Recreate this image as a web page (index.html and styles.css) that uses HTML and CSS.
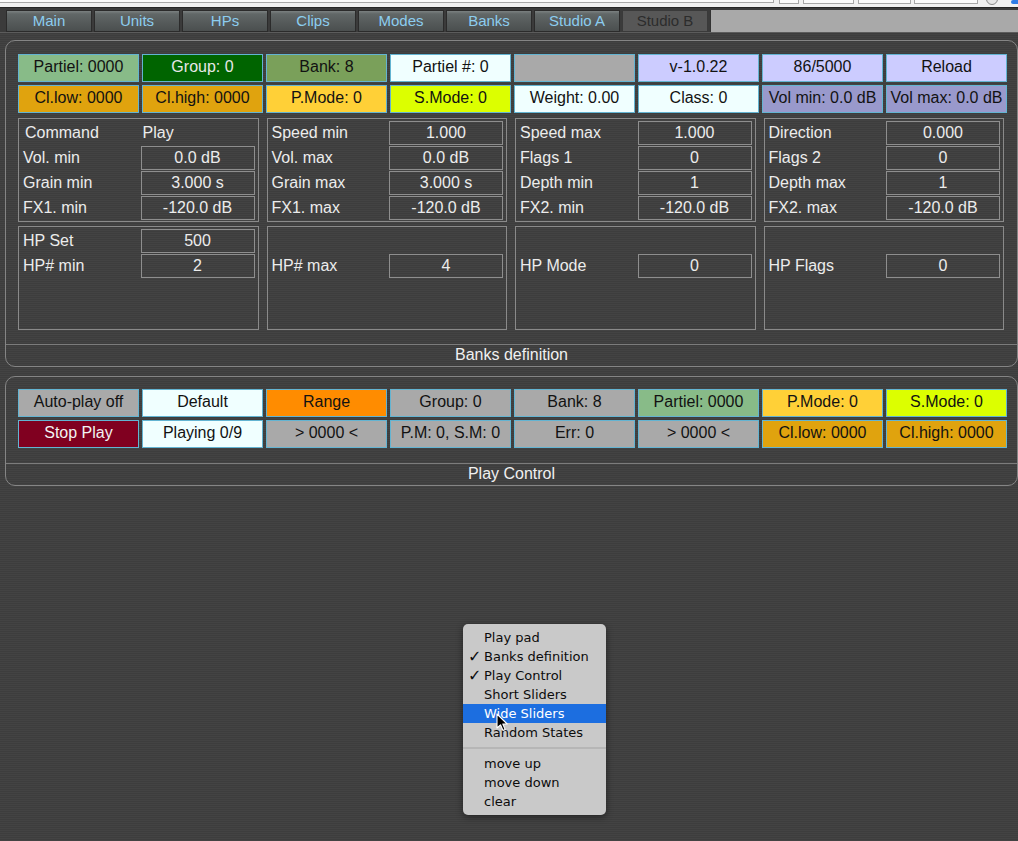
FILE: index.html
```html
<!DOCTYPE html>
<html>
<head>
<meta charset="utf-8">
<link rel="stylesheet" href="styles.css">
</head>
<body>
<div class="topstrip">
  <div class="tf tf1"></div>
  <div class="tf tf2"></div>
  <div class="tf tf3"></div>
  <div class="tf tf4"></div>
  <div class="tf tf5"></div>
  <div class="tcirc"></div>
  <div class="tblue"></div>
</div>
<div class="tabbar">
  <div class="tab">Main</div>
  <div class="tab">Units</div>
  <div class="tab">HPs</div>
  <div class="tab">Clips</div>
  <div class="tab">Modes</div>
  <div class="tab">Banks</div>
  <div class="tab">Studio A</div>
  <div class="tab sel">Studio B</div>
  <div class="tabfill"></div>
</div>

<div class="panel p1">
  <div class="pbody">
    <div class="btns">
      <div class="b c-green">Partiel: 0000</div>
      <div class="b c-dgreen">Group: 0</div>
      <div class="b c-olive">Bank: 8</div>
      <div class="b c-azure">Partiel #: 0</div>
      <div class="b c-gray"></div>
      <div class="b c-lav">v-1.0.22</div>
      <div class="b c-lav">86/5000</div>
      <div class="b c-lav">Reload</div>
      <div class="b c-gold">Cl.low: 0000</div>
      <div class="b c-gold">Cl.high: 0000</div>
      <div class="b c-yel">P.Mode: 0</div>
      <div class="b c-lime">S.Mode: 0</div>
      <div class="b c-azure">Weight: 0.00</div>
      <div class="b c-azure">Class: 0</div>
      <div class="b c-slate">Vol min: 0.0 dB</div>
      <div class="b c-slate">Vol max: 0.0 dB</div>
    </div>
    <div class="boxes">
      <div class="box">
        <div class="lbl hd">Command</div><div class="hv">Play</div>
        <div class="lbl">Vol. min</div><div class="val">0.0 dB</div>
        <div class="lbl">Grain min</div><div class="val">3.000 s</div>
        <div class="lbl">FX1. min</div><div class="val">-120.0 dB</div>
      </div>
      <div class="box">
        <div class="lbl">Speed min</div><div class="val">1.000</div>
        <div class="lbl">Vol. max</div><div class="val">0.0 dB</div>
        <div class="lbl">Grain max</div><div class="val">3.000 s</div>
        <div class="lbl">FX1. max</div><div class="val">-120.0 dB</div>
      </div>
      <div class="box">
        <div class="lbl">Speed max</div><div class="val">1.000</div>
        <div class="lbl">Flags 1</div><div class="val">0</div>
        <div class="lbl">Depth min</div><div class="val">1</div>
        <div class="lbl">FX2. min</div><div class="val">-120.0 dB</div>
      </div>
      <div class="box">
        <div class="lbl">Direction</div><div class="val">0.000</div>
        <div class="lbl">Flags 2</div><div class="val">0</div>
        <div class="lbl">Depth max</div><div class="val">1</div>
        <div class="lbl">FX2. max</div><div class="val">-120.0 dB</div>
      </div>
      <div class="box">
        <div class="lbl">HP Set</div><div class="val">500</div>
        <div class="lbl">HP# min</div><div class="val">2</div>
      </div>
      <div class="box">
        <div class="lbl"></div><div></div>
        <div class="lbl">HP# max</div><div class="val">4</div>
      </div>
      <div class="box">
        <div class="lbl"></div><div></div>
        <div class="lbl">HP Mode</div><div class="val">0</div>
      </div>
      <div class="box">
        <div class="lbl"></div><div></div>
        <div class="lbl">HP Flags</div><div class="val">0</div>
      </div>
    </div>
  </div>
  <div class="footer">Banks definition</div>
</div>

<div class="panel p2">
  <div class="pbody">
    <div class="btns">
      <div class="b c-gray">Auto-play off</div>
      <div class="b c-azure">Default</div>
      <div class="b c-orange">Range</div>
      <div class="b c-gray">Group: 0</div>
      <div class="b c-gray">Bank: 8</div>
      <div class="b c-green">Partiel: 0000</div>
      <div class="b c-yel">P.Mode: 0</div>
      <div class="b c-lime">S.Mode: 0</div>
      <div class="b c-red">Stop Play</div>
      <div class="b c-azure">Playing 0/9</div>
      <div class="b c-gray">&gt; 0000 &lt;</div>
      <div class="b c-gray">P.M: 0, S.M: 0</div>
      <div class="b c-gray">Err: 0</div>
      <div class="b c-gray">&gt; 0000 &lt;</div>
      <div class="b c-gold">Cl.low: 0000</div>
      <div class="b c-gold">Cl.high: 0000</div>
    </div>
  </div>
  <div class="footer">Play Control</div>
</div>

<div class="menu">
  <div class="mi">Play pad</div>
  <div class="mi"><span class="chk">✓</span>Banks definition</div>
  <div class="mi"><span class="chk">✓</span>Play Control</div>
  <div class="mi">Short Sliders</div>
  <div class="mi hi">Wide Sliders</div>
  <div class="mi">Random States</div>
  <div class="msep"></div>
  <div class="mi">move up</div>
  <div class="mi">move down</div>
  <div class="mi">clear</div>
</div>
<svg class="cursor" width="13" height="19" viewBox="0 0 13 19">
  <path d="M1 1 L1 15 L4.5 11.8 L7 17.5 L9.2 16.6 L6.8 11 L11.2 11 Z" fill="#000" stroke="#fff" stroke-width="1.1" stroke-linejoin="round"/>
</svg>
</body>
</html>
```

FILE: styles.css
```css
html, body {
  margin: 0;
  padding: 0;
}
body {
  width: 1018px;
  height: 841px;
  overflow: hidden;
  position: relative;
  font-family: "Liberation Sans", Arial, sans-serif;
  background: repeating-linear-gradient(to bottom, #434343 0px, #434343 1px, #3d3d3d 1px, #3d3d3d 2px);
}

/* top strip */
.topstrip {
  height: 7px;
  background: #f1f1f1;
  display: flex;
  align-items: flex-start;
  overflow: hidden;
}
.tf {
  height: 3px;
  background: #fbfbfb;
  border: 1px solid #a8a8a8;
  border-top: none;
  flex: none;
}
.tf1 { width: 774px; margin-left: -2px; height: 2px; }
.tf2 { width: 18px; margin-left: 5px; }
.tf3 { width: 49px; margin-left: 4px; }
.tf4 { width: 51px; margin-left: 4px; }
.tf5 { width: 62px; margin-left: 3px; }
.tcirc {
  width: 10px; height: 10px; border-radius: 50%;
  border: 1px solid #8a8a8a; margin-left: 8px; margin-top: -7px; background: #e6e6e6;
  flex: none;
}
.tblue {
  width: 10px; height: 4px; margin-left: 13px; background: #2f7ce6; border-radius: 2px; flex: none;
}

/* tabs */
.tabbar {
  height: 22px;
  padding: 2px 0 0 6px;
  border-top: 1px solid #262626;
  border-bottom: 1px solid #5c5c5c;
  background: #3b3b3b;
  display: flex;
}
.tab {
  width: 86px;
  height: 22px;
  box-sizing: border-box;
  margin-right: 2px;
  border: 1px solid #2b2b2b;
  background: linear-gradient(to bottom, #7b8181 0px, #616767 3px, #555a5a 12px, #484c4c 22px);
  color: #8ccdef;
  font-size: 15px;
  line-height: 19px;
  text-align: center;
  flex: none;
}
.tab.sel {
  background: #575757;
  color: #2c2c2c;
  border-color: #3a3a3a;
}
.tabfill {
  flex: 1;
  height: 22px;
  background: #a9a9a9;
  border-left: 1px solid #333;
  box-sizing: border-box;
}

/* panels */
.panel {
  margin-left: 5px;
  width: 1013px;
  box-sizing: border-box;
  border: 1px solid #858585;
  border-radius: 10px;
}
.p1 { margin-top: 7px; }
.p2 { margin-top: 9px; }
.pbody {
  padding: 13px 0 0 12px;
}
.p2 .pbody { padding-top: 12px; }
.btns {
  display: grid;
  grid-template-columns: repeat(8, 121px);
  grid-auto-rows: 28px;
  gap: 3px;
}
.b {
  box-sizing: border-box;
  border: 1px solid #63b4d2;
  color: #121212;
  font-size: 16px;
  line-height: 24px;
  text-align: center;
  white-space: nowrap;
  overflow: hidden;
}
.c-green { background: #88bb88; }
.c-dgreen { background: #006400; color: #e8e8e8; }
.c-olive { background: #7aa05a; }
.c-azure { background: #f0ffff; }
.c-gray { background: #a9a9a9; }
.c-lav { background: #ccccff; }
.c-gold { background: #e0a30e; }
.c-yel { background: #ffd037; }
.c-lime { background: #dcff00; }
.c-slate { background: #9999cc; }
.c-orange { background: #ff8c00; }
.c-red { background: #800020; color: #f2f2f2; }

.boxes {
  margin-top: 5px;
  width: 986px;
  display: grid;
  grid-template-columns: repeat(4, 1fr);
  column-gap: 8px;
  row-gap: 4px;
}
.box {
  box-sizing: border-box;
  height: 104px;
  border: 1px solid #8a8a8a;
  padding: 2px 3px 1px 0;
  display: grid;
  grid-template-columns: 1fr 114px;
  grid-auto-rows: 24px;
  row-gap: 1px;
  align-content: start;
}
.lbl {
  color: #ececec;
  font-size: 16px;
  line-height: 23px;
  padding-left: 4px;
  white-space: nowrap;
}
.lbl.hd { padding-left: 6px; }
.hv {
  color: #ececec;
  font-size: 16px;
  line-height: 23px;
  padding-left: 2px;
}
.val {
  box-sizing: border-box;
  border: 1px solid #8e8e8e;
  color: #ececec;
  font-size: 16px;
  line-height: 21px;
  text-align: center;
}

.footer {
  border-top: 1px solid #7c7c7c;
  height: 21px;
  line-height: 19px;
  text-align: center;
  color: #f0f0f0;
  font-size: 16px;
}
.p1 .footer { margin-top: 14px; }
.p2 .footer { margin-top: 15px; }

/* context menu */
.menu {
  position: absolute;
  left: 463px;
  top: 624px;
  width: 143px;
  height: 191px;
  box-sizing: border-box;
  padding: 4px 0;
  background: #c9c9c9;
  border-radius: 5px;
  box-shadow: 0 2px 7px rgba(0, 0, 0, 0.45);
  font-family: "DejaVu Sans", sans-serif;
  font-size: 13px;
  color: #0c0c0c;
}
.mi {
  height: 19px;
  line-height: 19px;
  padding-left: 21px;
  position: relative;
  white-space: nowrap;
}
.mi.hi {
  background: #1c6ee0;
  color: #fff;
}
.chk {
  position: absolute;
  left: 5px;
  top: 0;
  font-size: 16px;
  font-weight: bold;
}
.msep {
  height: 12px;
  position: relative;
}
.msep::after {
  content: "";
  position: absolute;
  left: 0;
  right: 0;
  top: 5px;
  height: 2px;
  background: #b6b6b6;
}
.cursor {
  position: absolute;
  left: 496px;
  top: 713px;
}
```
